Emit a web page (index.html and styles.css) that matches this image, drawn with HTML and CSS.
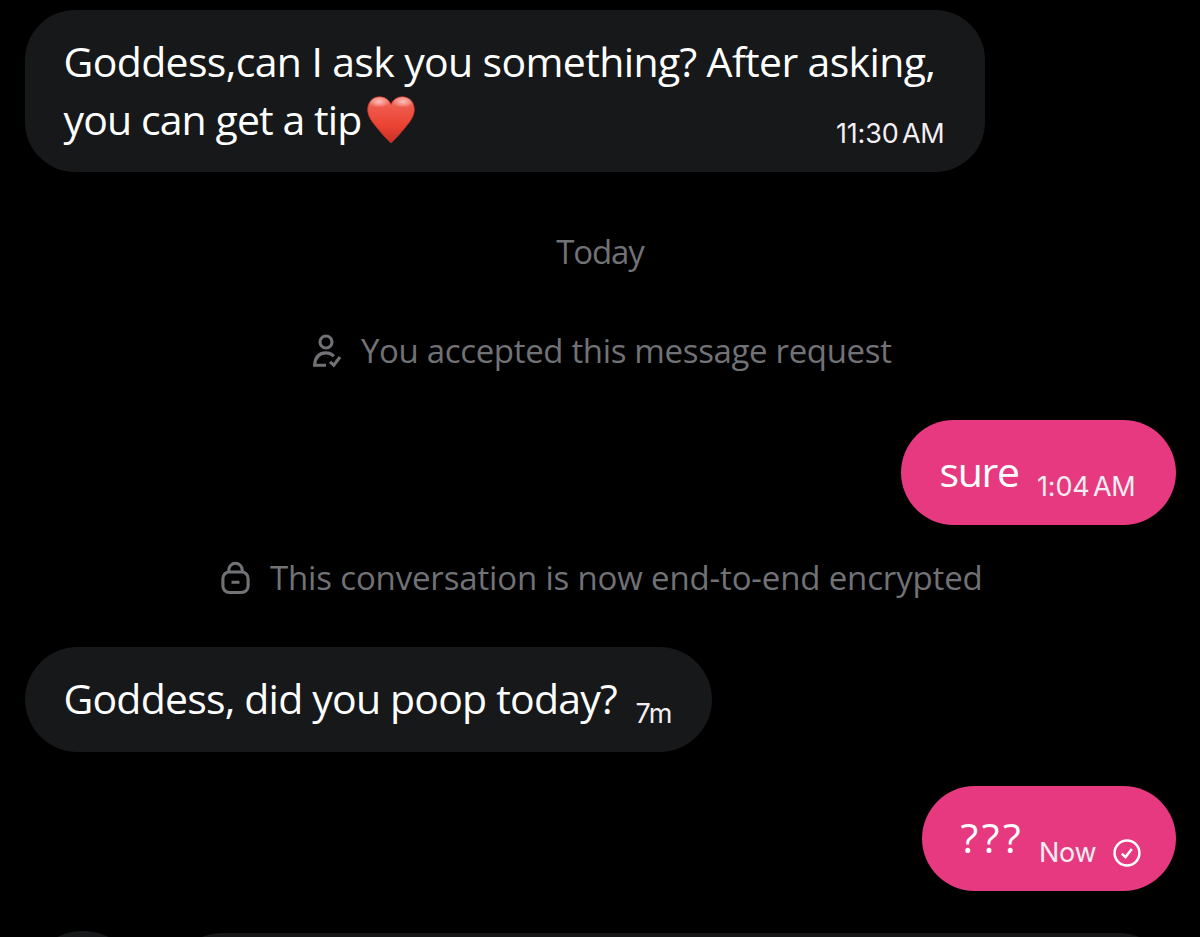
FILE: index.html
```html
<!DOCTYPE html>
<html lang="en">
<head>
    <meta charset="UTF-8">
    <meta name="viewport" content="width=device-width, initial-scale=1.0">
    <title>Messages</title>
    <link rel="stylesheet" href="styles.css">
</head>

<body>
<div class="chat">
    <div class="message received message-long">
        <div class="message-text">
            <div class="line-one">Goddess,can I ask you something? After asking,</div>
            <div class="line-two"><span>you can get a tip</span><svg class="heart" viewBox="0 0 48 48">
                <defs>
                    <linearGradient id="heartFill" x1="0" y1="0" x2="0" y2="1">
                        <stop offset="0" stop-color="#f9897d"/>
                        <stop offset="0.22" stop-color="#ee5a4c"/>
                        <stop offset="0.6" stop-color="#ec4434"/>
                        <stop offset="1" stop-color="#c92f25"/>
                    </linearGradient>
                    <radialGradient id="heartShine">
                        <stop offset="0" stop-color="#fff" stop-opacity="0.55"/>
                        <stop offset="1" stop-color="#fff" stop-opacity="0"/>
                    </radialGradient>
                </defs>
                <path fill="url(#heartFill)" stroke="#c9352c" stroke-width="0.8" d="M24 47C22.5 46 15 38 9 30.500C4 24.500 .7 19.500 .7 13.500C.7 6 6 .8 12.700 .8C17.800 .8 22 3.800 24 8.500C26 3.800 30.200 .8 35.300 .8C42 .8 47.300 6 47.300 13.500C47.300 19.500 44 24.500 39 30.500C33 38 25.500 46 24 47Z"/>
                <ellipse fill="url(#heartShine)" cx="12" cy="6" rx="10" ry="5.500"/>
                <ellipse fill="url(#heartShine)" cx="36" cy="6" rx="10" ry="5.500"/>
            </svg></div>
        </div>
        <span class="message-time">11:30 AM</span>
    </div>

    <div class="date-divider">Today</div>

    <div class="notice notice-accepted">
        <svg class="notice-icon" viewBox="0 0 32 34" fill="none" stroke="currentColor" stroke-width="3.100">
            <circle cx="15" cy="8" r="6"/>
            <path d="M22.800 22.300C20.800 20 18.200 18.900 15 18.900C8.300 18.900 4.200 23.300 3.600 31.200H15"/>
            <path d="M19 27.800L22.800 31.200L29 23"/>
        </svg>
        <span>You accepted this message request</span>
    </div>

    <div class="message sent message-sure">
        <div class="message-text">sure</div>
        <span class="message-time">1:04 AM</span>
    </div>

    <div class="notice notice-encrypted">
        <svg class="notice-icon" viewBox="0 0 32 34" fill="none" stroke="currentColor" stroke-width="3.100">
            <rect x="3.900" y="11" width="25.200" height="20.500" rx="6.500"/>
            <path d="M9.800 11V9A6.700 6.700 0 0 1 23.200 9V11M12.500 21.300H20.500"/>
        </svg>
        <span>This conversation is now end-to-end encrypted</span>
    </div>

    <div class="message received message-question">
        <div class="message-text">Goddess, did you poop today?</div>
        <span class="message-time">7m</span>
    </div>

    <div class="message sent message-marks">
        <div class="message-text">???</div>
        <span class="message-time">Now</span>
        <svg class="sent-icon" viewBox="0 0 28 28" fill="none" stroke="currentColor" stroke-width="2.500">
            <circle cx="14" cy="14" r="12.400"/>
            <path d="M8.800 14.600L12.500 18.100L18.800 9.900"/>
        </svg>
    </div>

    <div class="composer">
        <div class="composer-button"></div>
        <div class="composer-input"></div>
    </div>
</div>
</body>
</html>
```
FILE: styles.css
```css
* {
    margin: 0;
    padding: 0;
    box-sizing: border-box;
}

body {
    height: 937px;
    overflow: hidden;
    background-color: #000;
    font-family: 'Open Sans', 'Liberation Sans', sans-serif;
}

.chat {
    height: 937px;
    padding: 9.5px 24.5px 0;
    display: flex;
    flex-direction: column;
    overflow: hidden;
}

.message {
    display: flex;
    align-items: flex-end;
    flex-shrink: 0;
    height: 105px;
    padding: 22px 40px 0 39px;
    border-radius: 52.5px;
    color: #fff;
    white-space: nowrap;
}

.received {
    align-self: flex-start;
    background-color: #16181a;
}

.sent {
    align-self: flex-end;
    background-color: #e6397f;
}

.message-text {
    align-self: flex-start;
    font-size: 41px;
    line-height: 58px;
    letter-spacing: -0.8px;
}

.message-time {
    margin-left: auto;
    padding-bottom: 19px;
    font-family: Inter, 'Liberation Sans', sans-serif;
    font-size: 27px;
    line-height: 38px;
    letter-spacing: -0.2px;
    word-spacing: -4px;
    color: #f4eef2;
}

.message-long {
    width: 960px;
    height: 162px;
    border-radius: 50px;
}

.message-long .message-text {
    width: 0;
}

.line-one {
    letter-spacing: -0.64px;
}

.line-two {
    display: flex;
    align-items: center;
    letter-spacing: -0.9px;
}

.heart {
    flex-shrink: 0;
    width: 48px;
    height: 48px;
    margin: 2px 0 0 6px;
}

.date-divider {
    margin-top: 57px;
    font-size: 33px;
    line-height: 46px;
    letter-spacing: -1.1px;
    text-align: center;
    color: #717276;
}

.notice {
    display: flex;
    align-items: center;
    height: 46px;
    font-size: 33px;
    line-height: 46px;
    white-space: nowrap;
    color: #717276;
}

.notice-icon {
    flex-shrink: 0;
    width: 32px;
    height: 34px;
}

.notice-accepted {
    margin: 53px 0 46.5px 286.5px;
    gap: 18px;
    letter-spacing: -0.34px;
}

.notice-encrypted {
    margin: 30px 0 46px 194.5px;
    gap: 19px;
    letter-spacing: -0.16px;
}

.message-sure {
    width: 275px;
}

.message-sure .message-text {
    letter-spacing: -1.3px;
}

.message-question {
    width: 687px;
}

.message-question .message-time {
    letter-spacing: -0.8px;
}

.message-marks {
    width: 254px;
    margin-top: 34px;
    padding-right: 35px;
}

.message-marks .message-text {
    letter-spacing: 3.5px;
}

.sent-icon {
    width: 28px;
    height: 28px;
    margin: 0 0 24.5px 16px;
}

.composer {
    display: flex;
    gap: 24px;
    margin-top: 40px;
}

.composer-button {
    width: 116px;
    height: 116px;
    border-radius: 50%;
    background-color: #16181a;
}

.composer-input {
    flex: 1;
    height: 116px;
    margin-top: 2px;
    border-radius: 58px;
    background-color: #16181a;
}
```
